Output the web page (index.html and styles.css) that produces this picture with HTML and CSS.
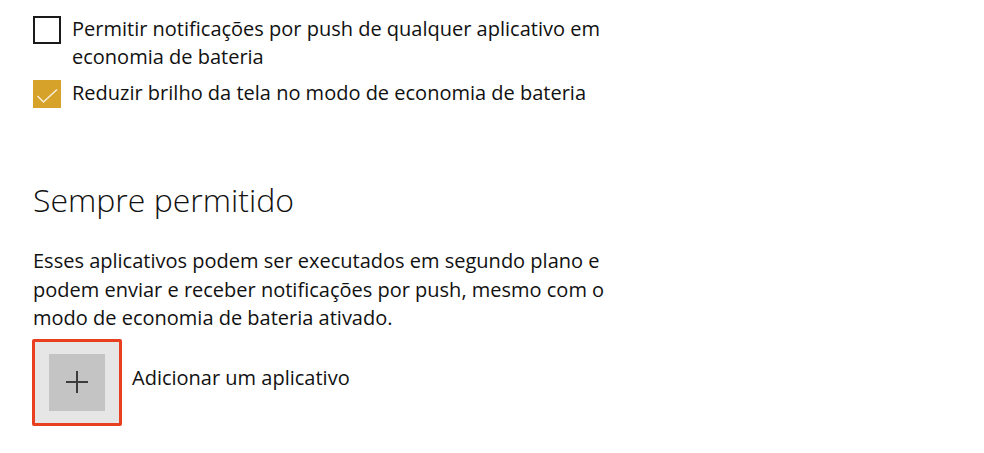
FILE: index.html
```html
<!DOCTYPE html>
<html lang="pt-BR">
<head>
<meta charset="utf-8">
<title>Economia de bateria</title>
<link rel="stylesheet" href="styles.css">
</head>
<body>
<main class="page">
  <div class="options">
    <div class="check-row">
      <span class="box"></span>
      <span class="label">Permitir notificações por push de qualquer aplicativo em<br>economia de bateria</span>
    </div>
    <div class="check-row">
      <span class="box checked">
        <svg viewBox="0 0 28 28" width="28" height="28"><path d="M4.5 16 L10.5 22 L24 9.5" fill="none" stroke="#f6ecd6" stroke-width="1.6"/></svg>
      </span>
      <span class="label">Reduzir brilho da tela no modo de economia de bateria</span>
    </div>
  </div>
  <h2 class="heading">Sempre permitido</h2>
  <p class="desc">Esses aplicativos podem ser executados em segundo plano e<br>podem enviar e receber notificações por push, mesmo com o<br>modo de economia de bateria ativado.</p>
  <div class="add-row">
    <div class="add-btn">
      <div class="add-inner">
        <svg viewBox="0 0 24 24" width="24" height="24"><path d="M12 1 V23 M1 12 H23" stroke="#3c3c3c" stroke-width="2" fill="none"/></svg>
      </div>
    </div>
    <span class="add-label">Adicionar um aplicativo</span>
  </div>
</main>
</body>
</html>
```

FILE: styles.css
```css
html, body {
  margin: 0;
  background: #ffffff;
}
body {
  font-family: "Open Sans", "Noto Sans", sans-serif;
  color: #111111;
}
.page {
  padding: 15px 0 0 33px;
  display: flex;
  flex-direction: column;
}
.options {
  display: flex;
  flex-direction: column;
  gap: 8px;
}
.check-row {
  display: flex;
  align-items: flex-start;
  gap: 11px;
}
.box {
  box-sizing: border-box;
  width: 28px;
  height: 28px;
  margin-top: 1px;
  border: 2.5px solid #1a1a1a;
  flex: none;
}
.box.checked {
  border: none;
  background: #d6a22a;
}
.box svg {
  display: block;
}
.label {
  font-size: 20px;
  line-height: 28px;
  white-space: nowrap;
}
.heading {
  margin: 72px 0 0 0;
  font-size: 32px;
  font-weight: 300;
  line-height: 40px;
  color: #111;
}
.desc {
  margin: 27px 0 0 0;
  font-size: 20px;
  line-height: 28.5px;
  white-space: nowrap;
}
.add-row {
  display: flex;
  align-items: center;
  gap: 10px;
  margin-top: 6px;
  margin-left: -1px;
}
.add-btn {
  box-sizing: border-box;
  width: 90px;
  height: 87px;
  border: 3px solid #e8401e;
  border-radius: 2px;
  background: #e6e6e6;
  display: flex;
  align-items: center;
  justify-content: center;
}
.add-inner {
  width: 56px;
  height: 57px;
  background: #c4c4c4;
  display: flex;
  align-items: center;
  justify-content: center;
}
.add-inner svg {
  display: block;
}
.add-label {
  font-size: 20px;
  line-height: 28px;
  margin-bottom: 8px;
}
```
